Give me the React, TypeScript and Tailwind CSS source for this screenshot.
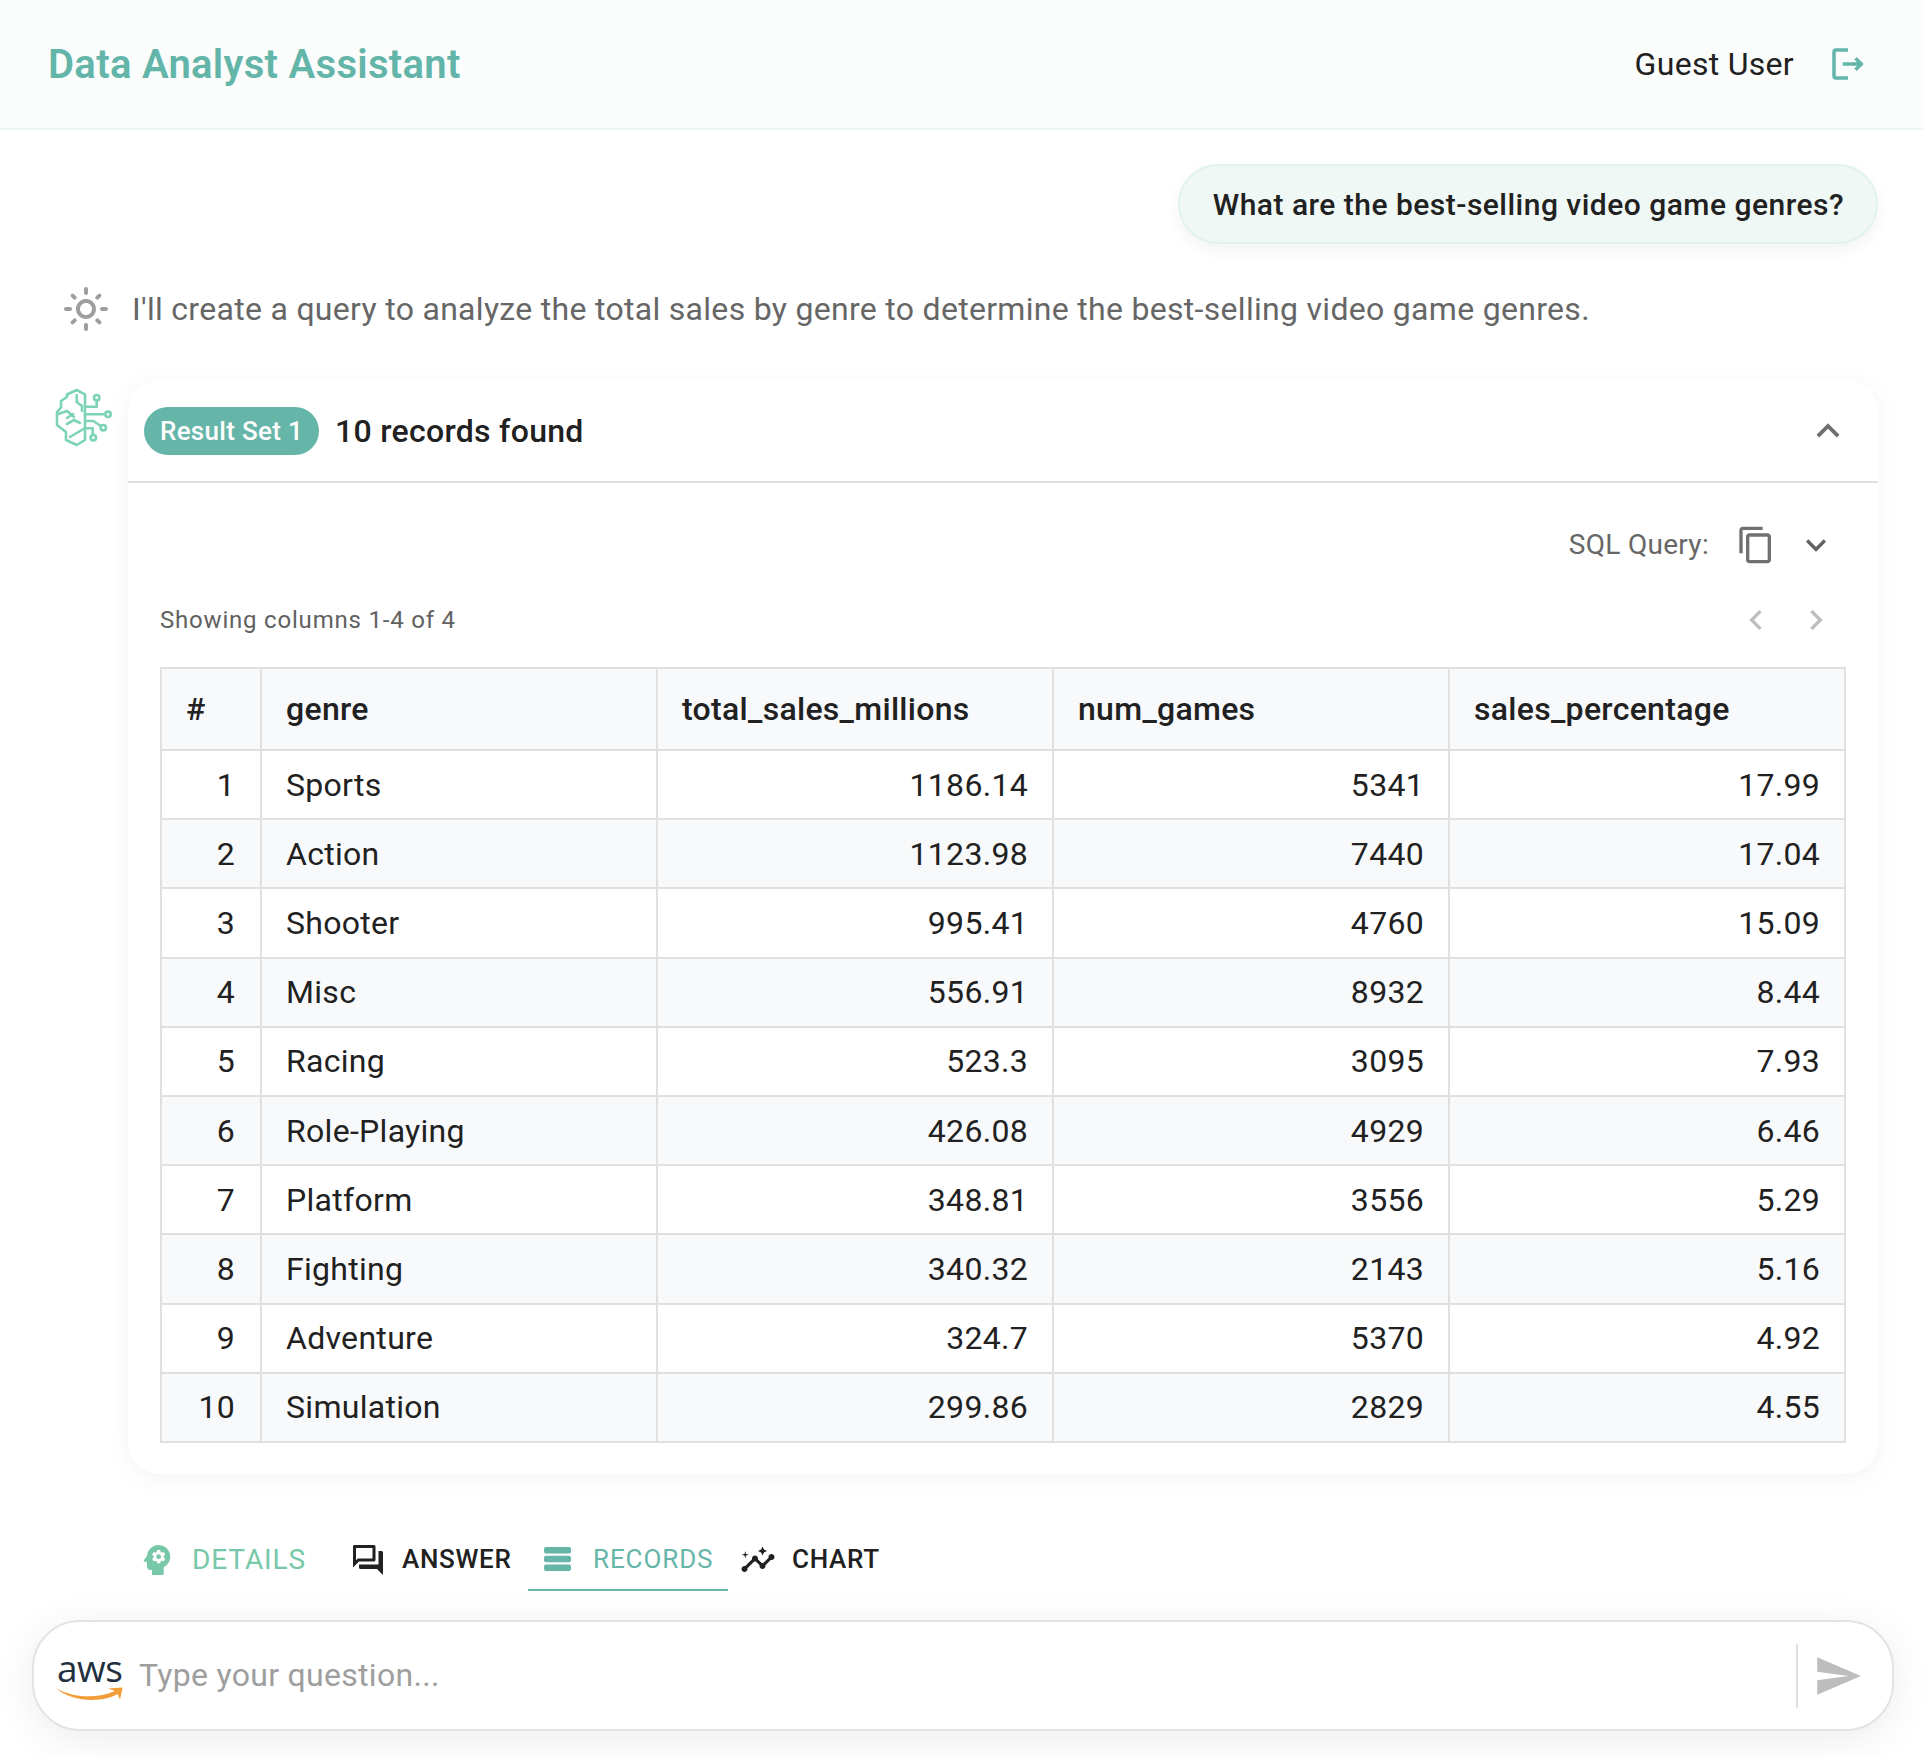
import { MdPsychology, MdOutlineQuestionAnswer, MdInsights, MdOutlineLogout, MdContentCopy, MdExpandLess, MdKeyboardArrowDown, MdNavigateBefore, MdNavigateNext, MdSend, MdOutlineLightMode } from 'react-icons/md'

const rows = [
    ['1', 'Sports', '1186.14', '5341', '17.99'],
    ['2', 'Action', '1123.98', '7440', '17.04'],
    ['3', 'Shooter', '995.41', '4760', '15.09'],
    ['4', 'Misc', '556.91', '8932', '8.44'],
    ['5', 'Racing', '523.3', '3095', '7.93'],
    ['6', 'Role-Playing', '426.08', '4929', '6.46'],
    ['7', 'Platform', '348.81', '3556', '5.29'],
    ['8', 'Fighting', '340.32', '2143', '5.16'],
    ['9', 'Adventure', '324.7', '5370', '4.92'],
    ['10', 'Simulation', '299.86', '2829', '4.55'],
]

const headers = ['genre', 'total_sales_millions', 'num_games', 'sales_percentage']

function BrainIcon() {
    return (
        <svg width="70" height="66" viewBox="0 0 70 66" fill="none" stroke="#7dd3b7" strokeWidth="2.6" strokeLinejoin="round" strokeLinecap="round" className="-ml-[5px]">
            {/* brain half */}
            <path d="M26.7 5 L35 9.3 V55 L26.7 60 L16 55 V47 L7 40 V27 L11 22.5 V16 L17 12 V9.5 Z" />
            <path d="M26.7 10 V17 L32 21 V26" />
            <path d="M8 29 L17 26 L24 32" />
            <path d="M17 33 L23 29" />
            <path d="M17 39 L24 35 L30 38" />
            <path d="M35 43 L20 52" />
            {/* circuit */}
            <path d="M46.7 15.5 V21.7 H35" />
            <path d="M35 29.3 H55" />
            <path d="M35 36 H43.3 L51 41" />
            <path d="M35 43.3 H42.7 V50" />
            <circle cx="46.7" cy="12.7" r="2.7" />
            <circle cx="58" cy="29.3" r="2.7" />
            <circle cx="53.3" cy="42.7" r="2.7" />
            <circle cx="43.3" cy="52.7" r="2.7" />
        </svg>
    )
}

function RowsIcon() {
    return (
        <svg width="27" height="24" viewBox="0 0 27 24" fill="#66b5a9" className="shrink-0">
            <rect x="0" y="0" width="27" height="6.5" rx="2" />
            <rect x="0" y="8.75" width="27" height="6.5" rx="2" />
            <rect x="0" y="17.5" width="27" height="6.5" rx="2" />
        </svg>
    )
}

function AwsLogo() {
    return (
        <div className="relative w-[68px] h-[46px] shrink-0">
            <span className="absolute left-[1px] top-[-9px] font-['Open_Sans',sans-serif] font-medium text-[37px] leading-[48px] text-[#232f3e] tracking-[-0.5px]">aws</span>
            <svg className="absolute left-0 top-[24px]" width="68" height="26" viewBox="0 0 68 26" fill="#f19e38">
                <path d="M0 11 C16 21 42 22 59 14 L52 11.5 L66.7 10.5 L64 22.5 L61.5 17 C44 27 14 24 0 11 Z" />
            </svg>
        </div>
    )
}

export default function App() {
    return (
        <div className="w-full h-[1756px] overflow-hidden bg-white font-[Roboto,sans-serif] text-[#212121] flex flex-col">
            {/* Header */}
            <header className="h-[130px] shrink-0 px-[48px] flex items-center justify-between bg-[#fbfdfc] border-b-2 border-[#eef7f5]">
                <h1 className="pt-[2px] text-[40px] font-semibold text-[#63b5a9] tracking-[0.3px]">Data Analyst Assistant</h1>
                <div className="flex items-center">
                    <span className="text-[32px] tracking-[0.3px]">Guest User</span>
                    <MdOutlineLogout size={42} className="text-[#63b5a9] ml-[33px] mr-[7px]" />
                </div>
            </header>

            {/* User question */}
            <div className="flex justify-end pr-[46px] mt-[34px]">
                <div className="h-[80px] pl-[33px] pr-[32px] flex items-center rounded-[40px] bg-[#f0f8f6] border-2 border-[#e0f2ee] shadow-[0_6px_16px_rgba(0,0,0,0.05)] text-[30px] font-medium tracking-[0.48px]">
                    What are the best-selling video game genres?
                </div>
            </div>

            {/* Thinking line */}
            <div className="flex items-center pl-[62px] mt-[41px] h-[48px]">
                <MdOutlineLightMode size={48} className="text-[#9e9e9e] shrink-0" />
                <p className="ml-[22px] text-[32px] text-[#666666] tracking-[0.3px]">I'll create a query to analyze the total sales by genre to determine the best-selling video game genres.</p>
            </div>

            {/* Result */}
            <div className="flex pl-[55px] pr-[48px] mt-[47px]">
                <div className="w-[73px] shrink-0 pt-[5px]">
                    <BrainIcon />
                </div>
                <div className="flex-1 rounded-[32px] bg-white shadow-[0_4px_24px_rgba(0,0,0,0.05)] h-[1094px]">
                    <div className="h-[103px] flex items-center pl-[16px] pr-[27px] border-b-2 border-[#e0e0e0]">
                        <span className="h-[48px] w-[175px] pt-[2px] rounded-[24px] bg-[#66b5a9] text-white text-[26px] font-medium flex items-center justify-center tracking-[0.3px]">Result Set 1</span>
                        <span className="ml-[16px] text-[32px] font-medium tracking-[0.3px]">10 records found</span>
                        <MdExpandLess size={46} className="ml-auto text-[#707070]" />
                    </div>
                    <div className="pl-[32px] pr-[32px]">
                        <div className="flex items-center justify-end h-[40px] mt-[42px] pr-[10px]">
                            <span className="text-[28px] text-[#666666] tracking-[0.3px]">SQL Query:</span>
                            <MdContentCopy size={40} className="ml-[27px] text-[#707070]" />
                            <MdKeyboardArrowDown size={40} className="ml-[20px] text-[#616161]" />
                        </div>
                        <div className="flex items-center justify-between h-[40px] mt-[35px] pr-[10px]">
                            <span className="text-[24px] text-[#616161] tracking-[0.8px]">Showing columns 1-4 of 4</span>
                            <div className="flex gap-[20px] text-[#bdbdbd]">
                                <MdNavigateBefore size={40} />
                                <MdNavigateNext size={40} />
                            </div>
                        </div>
                        <table className="mt-[27px] w-[1684px] table-fixed border-collapse text-[32px] tracking-[0.3px]">
                            <colgroup>
                                <col className="w-[100px]" />
                                <col className="w-[396px]" />
                                <col className="w-[396px]" />
                                <col className="w-[396px]" />
                                <col className="w-[396px]" />
                            </colgroup>
                            <thead>
                                <tr className="h-[82px] bg-[#f8f9fb]">
                                    <th className="border-2 border-[#e0e0e0] pl-[24px] text-left font-medium">#</th>
                                    {headers.map(h => (
                                        <th key={h} className="border-2 border-[#e0e0e0] px-[24px] text-left font-medium">{h}</th>
                                    ))}
                                </tr>
                            </thead>
                            <tbody>
                                {rows.map((row, i) => (
                                    <tr key={row[0]} className={i % 2 === 1 ? 'h-[69.2px] bg-[#f8f9fb]' : 'h-[69.2px] bg-white'}>
                                        <td className="border-2 border-[#e0e0e0] pr-[25px] text-right">{row[0]}</td>
                                        <td className="border-2 border-[#e0e0e0] px-[24px] text-left">{row[1]}</td>
                                        <td className="border-2 border-[#e0e0e0] px-[24px] text-right">{row[2]}</td>
                                        <td className="border-2 border-[#e0e0e0] px-[24px] text-right">{row[3]}</td>
                                        <td className="border-2 border-[#e0e0e0] px-[24px] text-right">{row[4]}</td>
                                    </tr>
                                ))}
                            </tbody>
                        </table>
                    </div>
                </div>
            </div>

            {/* Tabs */}
            <div className="flex items-stretch h-[69px] mt-[48px] pl-[137px]">
                <div className="flex items-center text-[#76c8a9] w-[213px] pt-[6px]">
                    <MdPsychology size={40} className="shrink-0" />
                    <span className="ml-[15px] text-[28px] tracking-[0.9px]">DETAILS</span>
                </div>
                <div className="flex items-center w-[178px] pt-[6px]">
                    <MdOutlineQuestionAnswer size={36} className="shrink-0" />
                    <span className="ml-[16px] text-[26px] font-medium tracking-[0.7px]">ANSWER</span>
                </div>
                <div className="flex items-center w-[200px] pl-[16px] pt-[6px] border-b-2 border-[#66b5a9] text-[#66b5a9]">
                    <RowsIcon />
                    <span className="ml-[22px] pt-[2px] text-[26px] tracking-[0.9px]">RECORDS</span>
                </div>
                <div className="flex items-center ml-[12px] pt-[6px]">
                    <MdInsights size={36} className="shrink-0" />
                    <span className="ml-[16px] text-[26px] font-medium tracking-[0.7px]">CHART</span>
                </div>
            </div>

            {/* Input */}
            <div className="pl-[32px] pr-[30px] mt-[29px]">
                <div className="h-[111px] rounded-[48px] bg-white border-2 border-[#e0e4e4] shadow-[0_8px_40px_rgba(0,0,0,0.08)] flex items-center pl-[22px]">
                    <AwsLogo />
                    <span className="ml-[15px] pb-[2px] text-[32px] text-[#9e9e9e] tracking-[0.3px]">Type your question...</span>
                    <div className="ml-auto w-[2px] h-[64px] bg-[#dfdfdf]" />
                    <MdSend size={50} className="ml-[15px] mr-[29px] text-[#bdbdbd]" />
                </div>
            </div>
        </div>
    )
}
